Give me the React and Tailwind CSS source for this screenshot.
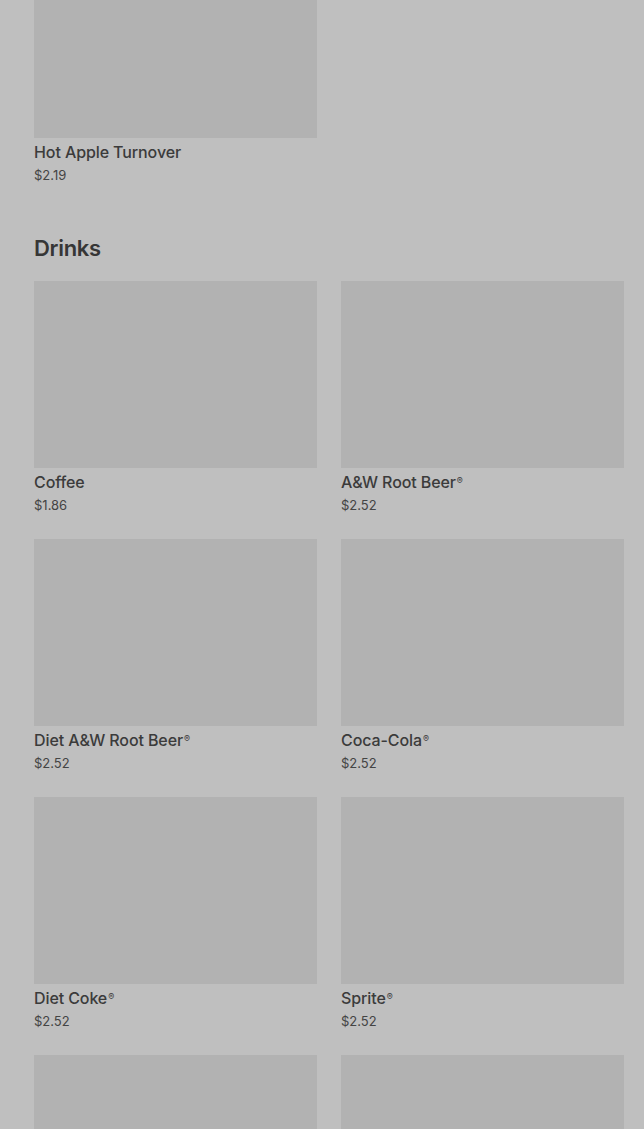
import React from 'react';

const drinks = [
  { name: 'Coffee', price: '$1.86' },
  { name: 'A&W Root Beer', reg: true, price: '$2.52' },
  { name: 'Diet A&W Root Beer', reg: true, price: '$2.52' },
  { name: 'Coca-Cola', reg: true, price: '$2.52' },
  { name: 'Diet Coke', reg: true, price: '$2.52' },
  { name: 'Sprite', reg: true, price: '$2.52' },
];

const ItemCard = ({ name, reg, price, imgClass = 'h-[187px]' }) => (
  <div className="flex flex-col">
    <div className={`${imgClass} w-full bg-[#b2b2b2]`} />
    <div className="mt-[4px] text-[16px] leading-[20px] font-medium tracking-[-0.1px] text-[#3b3b3b]">
      {name}
      {reg && <sup className="ml-[1px] text-[9px] font-normal">®</sup>}
    </div>
    <div className="mt-[5px] text-[13px] leading-[16px] text-[#444444]">{price}</div>
  </div>
);

const App = () => {
  return (
    <div className="h-[1129px] overflow-hidden bg-[#bfbfbf] pl-[34px] pr-[20px] font-['Inter','Liberation_Sans',sans-serif]">
      <div className="grid grid-cols-2 gap-x-[24px]">
        <ItemCard name="Hot Apple Turnover" price="$2.19" imgClass="h-[138px]" />
      </div>

      <h2 className="mt-[51px] text-[22px] leading-[28px] font-semibold tracking-[-0.3px] text-[#363636]">
        Drinks
      </h2>

      <div className="mt-[19px] grid grid-cols-2 gap-x-[24px] gap-y-[26px]">
        {drinks.map((d) => (
          <ItemCard key={d.name} name={d.name} reg={d.reg} price={d.price} />
        ))}
        <div className="h-[187px] bg-[#b2b2b2]" />
        <div className="h-[187px] bg-[#b2b2b2]" />
      </div>
    </div>
  );
};

export default App;
